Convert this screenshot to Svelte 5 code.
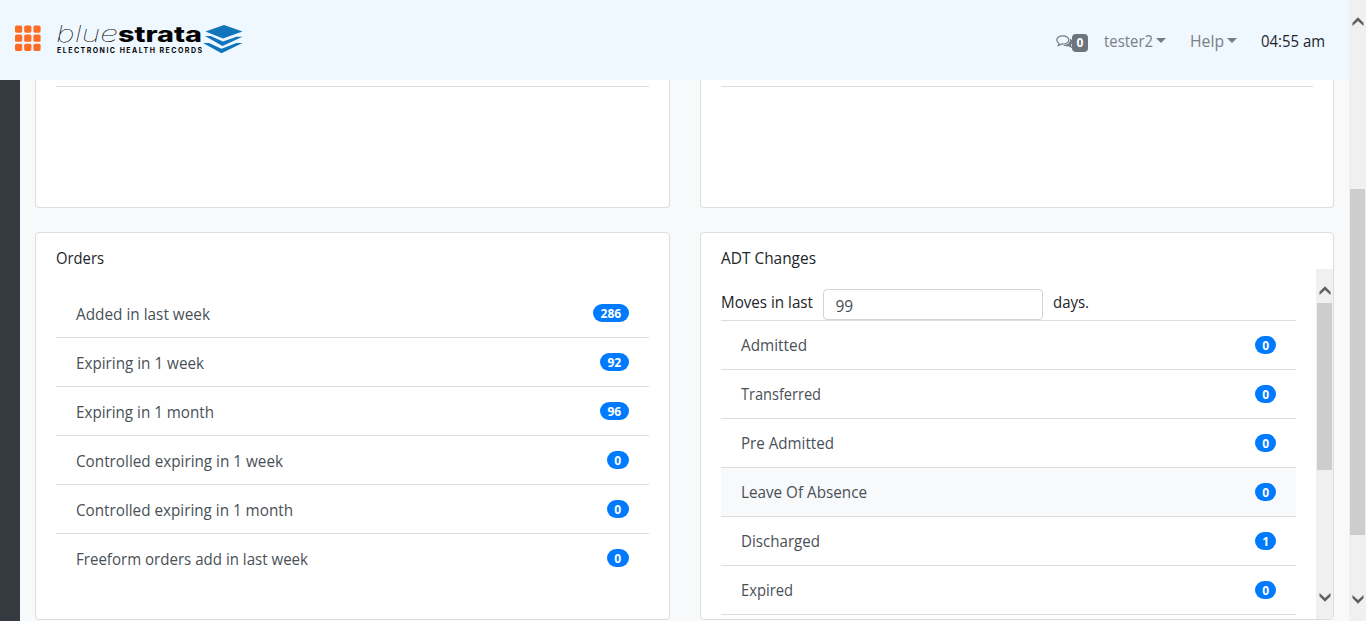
<script>
  const orders = [
    ['Added in last week', 286, 134],
    ['Expiring in 1 week', 92, 128],
    ['Expiring in 1 month', 96, 138],
    ['Controlled expiring in 1 week', 0, 207],
    ['Controlled expiring in 1 month', 0, 217],
    ['Freeform orders add in last week', 0, 232]
  ];
  const moves = [
    ['Admitted', 0, 66],
    ['Transferred', 0, 80],
    ['Pre Admitted', 0, 93],
    ['Leave Of Absence', 0, 126],
    ['Discharged', 1, 79],
    ['Expired', 0, 52]
  ];
  let days = $state('99');
</script>

{#snippet label(text, width)}
  <svg class="label" width={width} height="24"><text x="0" y="17.5" textLength={width} lengthAdjust="spacingAndGlyphs">{text}</text></svg>
{/snippet}

{#snippet chevron(down)}
  <svg class="chevron" class:down width="12" height="9" viewBox="0 0 12 9"><path d="M0.500 5.800 6 0.300 11.500 5.800V9L6 4 0.500 9Z" fill="#606060" /></svg>
{/snippet}

{#snippet rows(items)}
  {#each items as [text, count, width]}
    <li class:hovered={text === 'Leave Of Absence'}>
      {@render label(text, width)}
      <span class="badge">{count}</span>
    </li>
  {/each}
{/snippet}

<div class="screen">
  <div class="page">
    <header>
      <svg class="apps" width="26" height="27" viewBox="0 0 26 27" fill="#ff6b22">
        {#each [0.5, 9.6, 18.7] as y}
          {#each [0, 9.2, 18.4] as x}
            <rect {x} {y} width="7.2" height="7.2" rx="1.6" />
          {/each}
        {/each}
      </svg>
      <svg class="logo" width="190" height="42" viewBox="-2 -6 190 42">
        <text class="thin" x="-1" y="20" textLength="62" lengthAdjust="spacingAndGlyphs">blue</text>
        <text class="heavy" x="61" y="20" textLength="84" lengthAdjust="spacingAndGlyphs">strata</text>
        <text class="tag" x="0" y="31" textLength="145" lengthAdjust="spacing">ELECTRONIC HEALTH RECORDS</text>
        <g fill="#1175bc">
          <path d="M167 3 185.500 9.500 166 16.500 148.500 9.500Z" />
          <path d="M148 14h5.500L166 19.500 179.500 14.700h6L165.500 24Z" />
          <path d="M146 21h6L164.500 26.800 179.500 21h6L164.500 31.200Z" />
        </g>
      </svg>
      <nav>
        <svg class="chat" width="17" height="14" viewBox="0 0 17 14">
          <path d="M6.800 .8C3.400 .8 .8 2.600 .8 5c0 1.500 .9 2.800 2.300 3.500L2.200 10.600c1.300-.3 2.300-.9 3-1.500 4.400.5 7.700-1.400 7.700-4.100C12.900 2.600 10.200 .8 6.800 .8Z" fill="none" stroke="#777c82" stroke-width="1.200" />
          <path d="M14 3.400c3.300 1.800 3.300 4.900 1 6.700l1.400 2.900c-1.900-.2-3-.9-3.800-1.700-2 .3-4-.1-5.400-1.100 4.200.2 7.500-2.500 6.800-6.800Z" fill="#777c82" />
        </svg>
        <span class="unread">0</span>
        <a class="user" href="#user">{@render label('tester2', 49)}<i></i></a>
        <a class="help" href="#help">{@render label('Help', 34)}<i></i></a>
        <time>{@render label('04:55 am', 64)}</time>
      </nav>
    </header>
    <div class="body">
      <aside></aside>
      <main>
        <section class="upper"><div class="rule"></div></section>
        <section class="upper"><div class="rule"></div></section>
        <section class="card">
          <h2>{@render label('Orders', 48)}</h2>
          <ul class="orders">{@render rows(orders)}</ul>
        </section>
        <section class="card">
          <h2>{@render label('ADT Changes', 95)}</h2>
          <div class="scroller">
            <div class="content">
              <div class="filter">
                {@render label('Moves in last', 92)}
                <input bind:value={days} />
                {@render label('days.', 36)}
              </div>
              <ul class="moves">{@render rows(moves)}</ul>
            </div>
            <div class="bar inner">
              {@render chevron(false)}
              <div class="thumb"></div>
              {@render chevron(true)}
            </div>
          </div>
        </section>
      </main>
    </div>
  </div>
  <div class="bar outer">
    {@render chevron(false)}
    <div class="thumb"></div>
    {@render chevron(true)}
  </div>
</div>

<style>
  :global(body) { margin: 0; overflow: hidden; }
  * { box-sizing: border-box; }
  .screen {
    display: flex;
    height: 621px;
    overflow: hidden;
    background: #f8f9fa;
    color: #212529;
    font: 16px/24px "Open Sans", "Noto Sans", sans-serif;
  }
  .page { width: 1349px; display: flex; flex-direction: column; }
  header { height: 80px; flex: none; display: flex; align-items: flex-start; background: #eff7ff; }
  .apps { margin: 25px 0 0 15px; }
  .logo { margin: 16px 0 0 14px; overflow: visible; }
  .logo text { fill: #050505; }
  .thin { font: italic 100 23px Inter, sans-serif; }
  .heavy { font: 800 21px Inter, sans-serif; }
  .logo .tag { font: 700 7px Inter, sans-serif; }
  nav { display: flex; align-items: flex-start; margin: 29px 24px 0 auto; color: #7b8085; }
  nav a { display: flex; color: inherit; text-decoration: none; }
  nav i { margin: 9px 0 0 3px; height: 5px; border: 5px solid transparent; border-top-color: #777b82; border-bottom: 0; }
  .chat { margin-top: 6px; }
  .unread {
    width: 16px; height: 18px; margin: 5px 16px 0 -1px; border-radius: 4px;
    background: #6c757d; color: #fff; text-align: center; font-size: 12px; line-height: 18px; font-weight: 700;
  }
  .help { margin-left: 24px; }
  time { margin-left: 24px; color: #212529; }
  .label { display: block; flex: none; overflow: visible; fill: currentColor; }
  .body { display: flex; flex: 1; min-height: 0; }
  aside { width: 20px; background: #343a40; }
  main {
    flex: 1;
    display: grid;
    grid-template-columns: 1fr 1fr;
    grid-template-rows: 128px 387px;
    gap: 24px 30px;
    padding: 0 15px;
  }
  section { min-width: 0; background: #fff; border: 1px solid #dcdddf; border-radius: 4px; }
  .upper { border-top: 0; border-radius: 0 0 4px 4px; padding: 6px 20px; }
  .rule { height: 1px; background: #dcdddf; }
  .card { height: 388px; display: flex; flex-direction: column; }
  h2 { margin: 13px 20px 0; height: 23px; font: inherit; }
  ul { list-style: none; margin: 0; padding: 0; }
  li {
    height: 49px; padding: 0 20px; border-bottom: 1px solid #dcdddf;
    display: flex; align-items: center; justify-content: space-between; color: #495057;
  }
  li.hovered { background: #f8f9fa; }
  .orders { margin: 20px 20px 0; }
  .orders li:last-child { border-bottom-color: transparent; }
  .orders .label { margin-top: 2px; }
  .badge {
    height: 18px; padding: 0 7px; border-radius: 9px; background: #007bff; color: #fff;
    font-size: 12px; line-height: 19px; font-weight: 700;
  }
  .orders .badge { padding: 0 7.400px; }
  .scroller { flex: 1; display: flex; min-height: 0; }
  .content { flex: 1; padding: 20px 20px 0; overflow: hidden; }
  .filter { display: flex; height: 31px; }
  .filter .label { margin-top: 1px; }
  input {
    width: 220px; height: 31px; margin: 0 10px; padding: 3px 12px 0;
    border: 1px solid #ced4da; border-radius: 4px; background: #fff; color: #495057;
    font: inherit; font-size: 15.500px; outline: 0;
  }
  .moves { border-top: 1px solid #dcdddf; }
  .bar { flex: none; width: 17px; background: #f0f0f0; display: flex; flex-direction: column; align-items: center; }
  .thumb { width: 15px; background: #cdcdcd; }
  .chevron { flex: none; }
  .down { transform: rotate(180deg); margin-top: auto; }
  .inner { padding: 17px 0; }
  .inner .thumb { margin-top: 8px; height: 167px; }
  .outer { padding: 17px 0; }
  .outer .thumb { margin-top: 163px; height: 346px; }
</style>
